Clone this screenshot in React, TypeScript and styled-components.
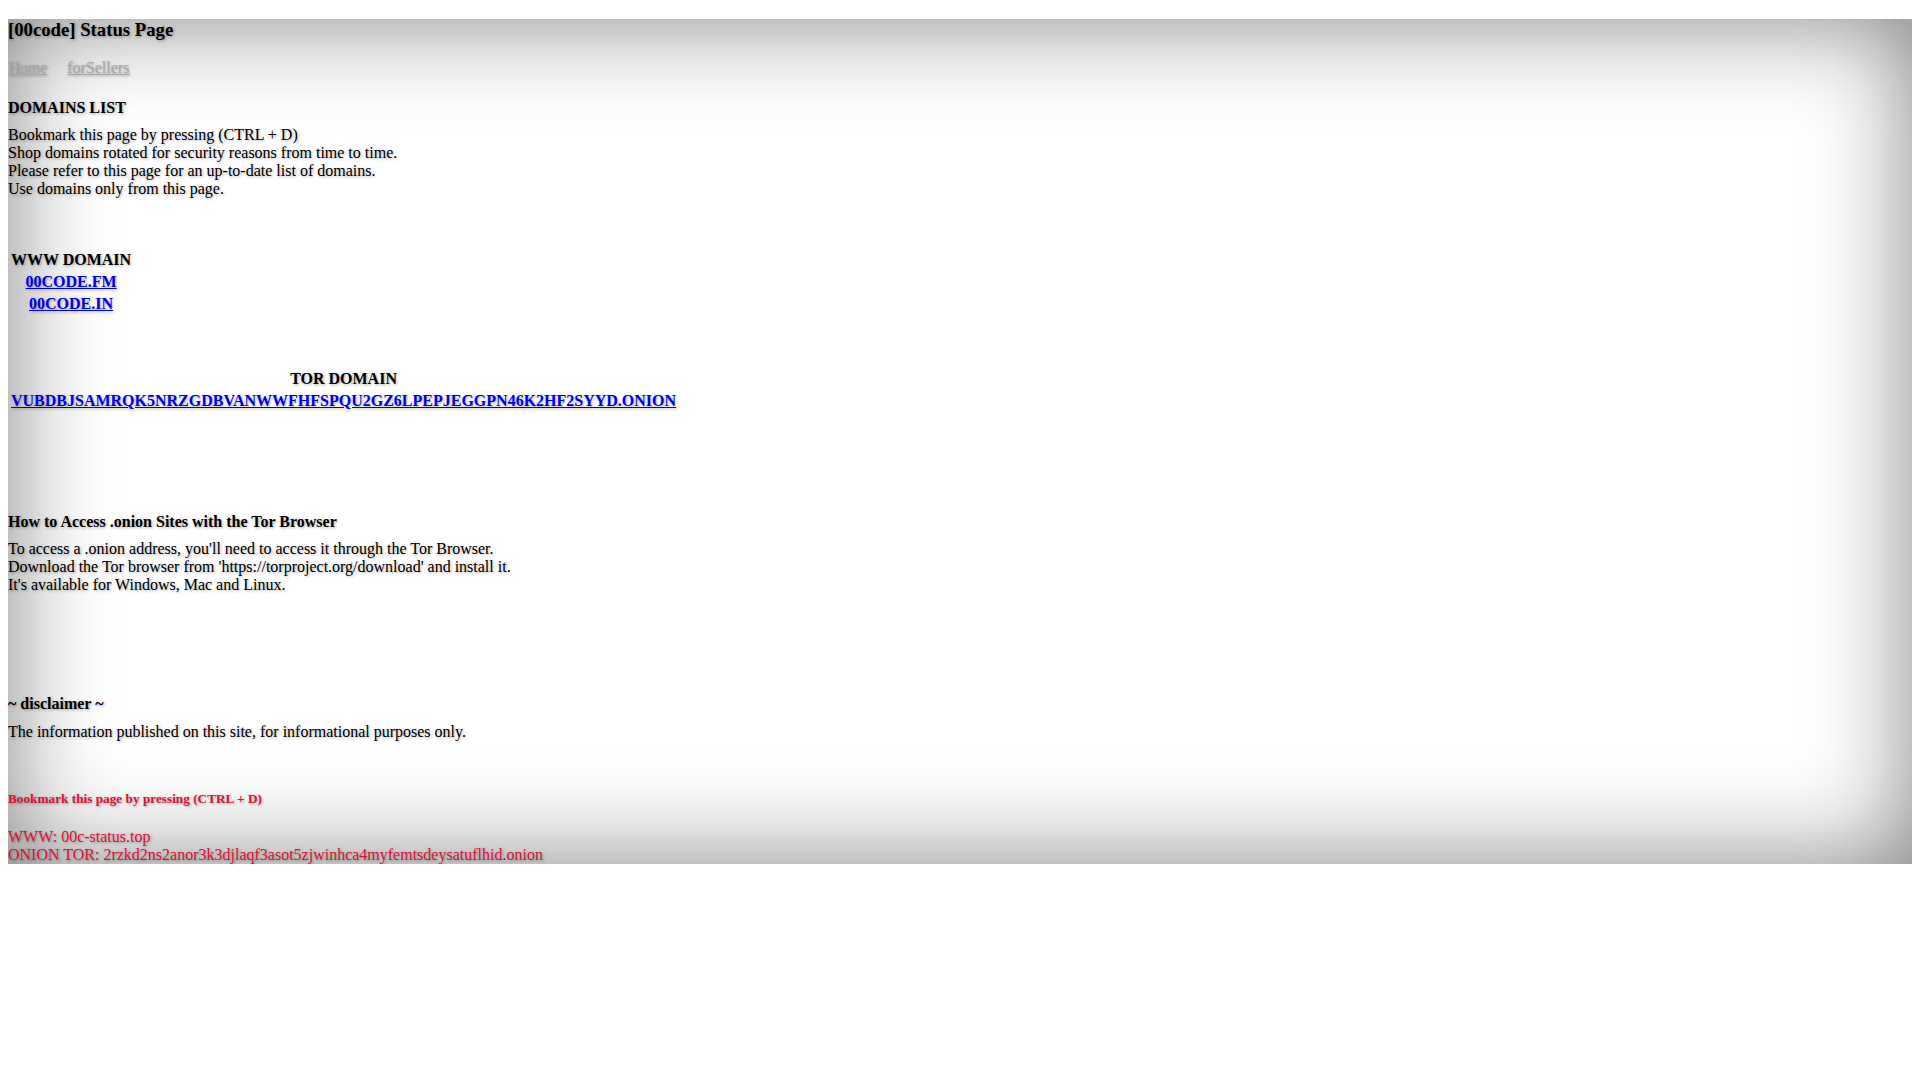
import React from "react";
import styled, { createGlobalStyle } from "styled-components";

const GlobalStyle = createGlobalStyle`
  html, body {
    margin: 0;
    padding: 0;
    background: #ffffff;
  }
  body {
    font-family: "Liberation Serif", "Times New Roman", serif;
    font-size: 16px;
    color: #000;
  }
`;

const Wrapper = styled.div`
  margin: 18.72px 8px 0;
  background: #ffffff;
  box-shadow: inset 0 0 100px rgba(0, 0, 0, 0.5);
  text-shadow: 1px 1px 3px rgba(0, 0, 0, 0.35);
`;

const Title = styled.h3`
  margin: 0;
  font-size: 18.72px;
  font-weight: bold;
`;

const Nav = styled.nav`
  display: flex;
  gap: 20px;
  margin-top: 18.72px;
`;

const NavLink = styled.a`
  color: #a8a8a8;
  text-decoration: underline;
`;

const Heading = styled.h4<{ $top: number }>`
  margin: ${(p) => p.$top}px 0 9.6px;
  font-size: 16px;
  font-weight: bold;
`;

const Text = styled.p`
  margin: 0;
`;

const DomainTable = styled.table<{ $top: number }>`
  margin-top: ${(p) => p.$top}px;
  border-spacing: 2px;
  border-collapse: separate;
  font-size: 16px;
`;

const HeadCell = styled.th`
  padding: 1px;
  font-weight: bold;
  text-align: center;
`;

const Cell = styled.td`
  padding: 1px;
  text-align: center;
  font-weight: bold;
`;

const DomainLink = styled.a`
  color: #0000ee;
  text-decoration: underline;
`;

const Notice = styled.h5`
  margin: 49.8px 0 21.6px;
  font-size: 13.28px;
  font-weight: bold;
  color: #dc143c;
`;

const Footer = styled.div`
  color: #dc143c;
`;

function Table({ top, title, links }: { top: number; title: string; links: string[] }) {
  return (
    <DomainTable $top={top}>
      <tbody>
        <tr>
          <HeadCell>{title}</HeadCell>
        </tr>
        {links.map((l) => (
          <tr key={l}>
            <Cell>
              <DomainLink href="#">{l}</DomainLink>
            </Cell>
          </tr>
        ))}
      </tbody>
    </DomainTable>
  );
}

export default function App() {
  return (
    <>
      <GlobalStyle />
      <Wrapper>
        <Title>[00code] Status Page</Title>
        <Nav>
          <NavLink href="#">Home</NavLink>
          <NavLink href="#">forSellers</NavLink>
        </Nav>
        <Heading $top={21.28}>DOMAINS LIST</Heading>
        <Text>
          Bookmark this page by pressing (CTRL + D)
          <br />
          Shop domains rotated for security reasons from time to time.
          <br />
          Please refer to this page for an up-to-date list of domains.
          <br />
          Use domains only from this page.
        </Text>
        <Table top={50.2} title="WWW DOMAIN" links={["00CODE.FM", "00CODE.IN"]} />
        <Table
          top={50.4}
          title="TOR DOMAIN"
          links={["VUBDBJSAMRQK5NRZGDBVANWWFHFSPQU2GZ6LPEPJEGGPN46K2HF2SYYD.ONION"]}
        />
        <Heading $top={99.8}>How to Access .onion Sites with the Tor Browser</Heading>
        <Text>
          To access a .onion address, you'll need to access it through the Tor Browser.
          <br />
          Download the Tor browser from 'https://torproject.org/download' and install it.
          <br />
          It's available for Windows, Mac and Linux.
        </Text>
        <Heading $top={101}>~ disclaimer ~</Heading>
        <Text>The information published on this site, for informational purposes only.</Text>
        <Notice>Bookmark this page by pressing (CTRL + D)</Notice>
        <Footer>
          WWW: 00c-status.top
          <br />
          ONION TOR: 2rzkd2ns2anor3k3djlaqf3asot5zjwinhca4myfemtsdeysatuflhid.onion
        </Footer>
      </Wrapper>
    </>
  );
}
